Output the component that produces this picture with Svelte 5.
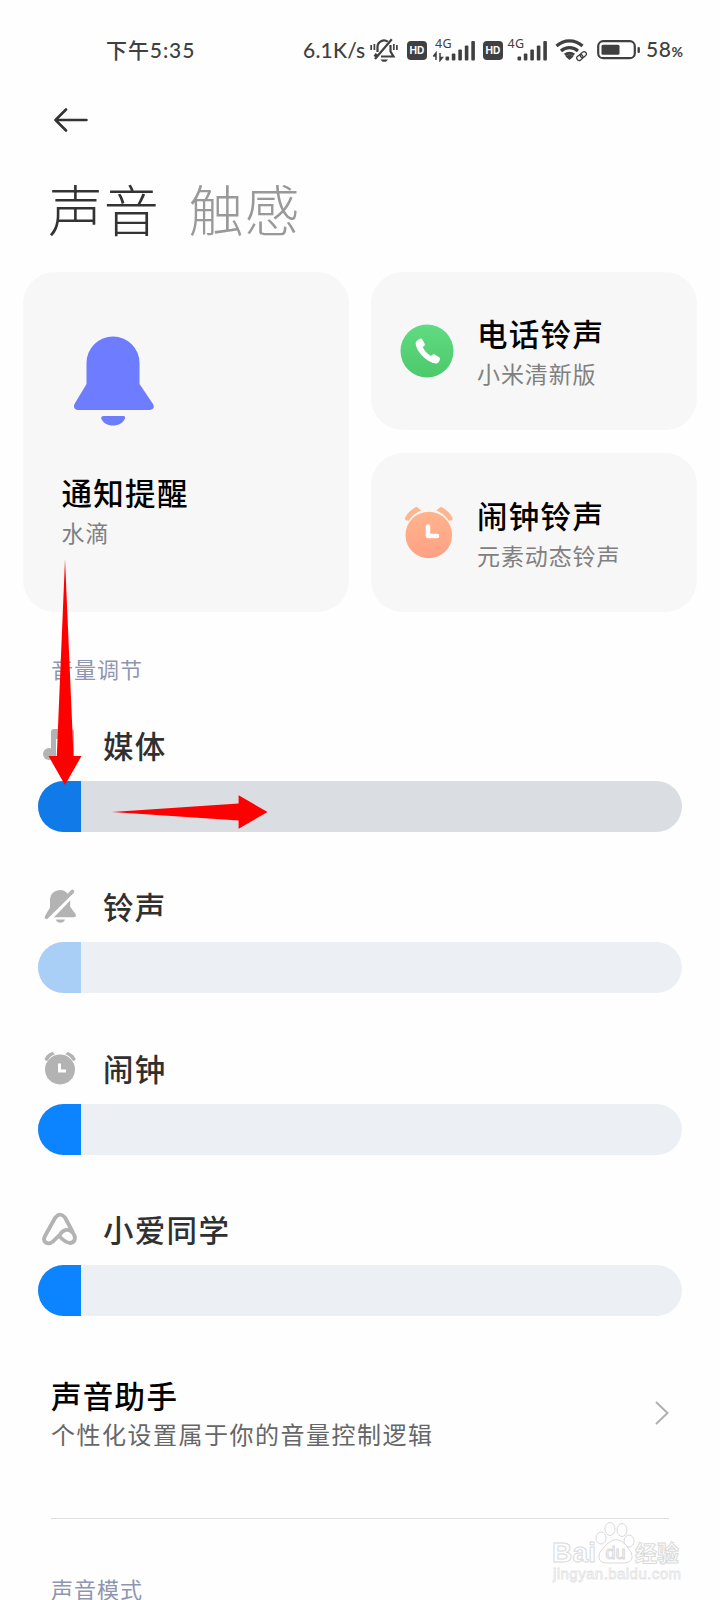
<script lang="ts">
	interface Volume {
		id: string;
		name: string;
		level: number;
		state: string;
	}

	const volumes: Volume[] = [
		{ id: 'media', name: '媒体', level: 6.7, state: 'active' },
		{ id: 'ring', name: '铃声', level: 6.7, state: 'muted' },
		{ id: 'alarm', name: '闹钟', level: 6.7, state: '' },
		{ id: 'xiaoai', name: '小爱同学', level: 6.7, state: '' }
	];

	const ringtones = [
		{ id: 'phone', title: '电话铃声', value: '小米清新版' },
		{ id: 'alarm', title: '闹钟铃声', value: '元素动态铃声' }
	];
</script>

{#snippet hd()}
	<svg class="hd" width="20" height="19" viewBox="0 0 20 19">
		<rect width="20" height="19" rx="4" />
		<text x="2.6" y="13.2" textLength="14.8" lengthAdjust="spacingAndGlyphs">HD</text>
	</svg>
{/snippet}

{#snippet signal(data: boolean)}
	<svg class="signal" class:data width={data ? 42 : 40} height="26" viewBox="0 -2 {data ? 42 : 40} 26">
		<text x={data ? 2 : 0.5} y="9.5" textLength="16.5">4G</text>
		{#if data}
			<path d="M3 22v-6M0.6 18L3 15v3zM7 15v6M9.4 19.5L7 22.5v-3z" stroke-width="1.5" />
		{/if}
		<g transform="translate({data ? 12.5 : 10.5} -.5)">
			<rect y="19" width="3.6" height="4" rx="1" />
			<rect x="6.3" y="16" width="3.6" height="7" rx="1" />
			<rect x="12.8" y="12" width="3.6" height="11" rx="1" />
			<rect x="19.3" y="8" width="3.6" height="15" rx="1" />
			<rect x="25.8" y="3.5" width="3.6" height="19.5" rx="1" />
		</g>
	</svg>
{/snippet}

<main>
	<div class="status">
		<span class="time">下午5:35</span>
		<span class="speed">6.1K/s</span>
		<svg width="28" height="26" viewBox="0 0 28 26" fill="none" stroke="#404040" stroke-width="2.2">
			<path d="M7.5 15V10a6.5 6.5 0 0 1 10.3-5.3M20.5 8v6.5l3 5H11M4.5 19.5l2-2.8M5 22L21.8 2.2" />
			<path d="M1.2 8v5M4.4 7v6M23.8 7v6M26.9 8v5" stroke-width="1.7" />
			<path d="M10.5 22.5h7.5l-2 2.2h-3.5z" fill="#404040" stroke="none" />
		</svg>
		{@render hd()}
		{@render signal(true)}
		{@render hd()}
		{@render signal(false)}
		<svg class="wifi" width="33" height="24" viewBox="0 0 33 24" fill="none" stroke="#404040">
			<path d="M1.5 8a19 19 0 0 1 26 0M6 13a12.5 12.5 0 0 1 17 0M10 17a7 7 0 0 1 9 0" stroke-width="3.2" />
			<path d="M10.5 18.5a5.5 5.5 0 0 1 8 0L14.5 22z" fill="#404040" stroke="none" />
			<g stroke-width="1.3" transform="rotate(-40 26.5 18)">
				<rect x="21" y="15.8" width="6.5" height="4.6" rx="2.3" fill="#fefefe" />
				<rect x="25.5" y="15.8" width="6.5" height="4.6" rx="2.3" />
			</g>
		</svg>
		<svg class="battery" width="44" height="20" viewBox="0 0 44 20">
			<rect x="1.2" y="1.2" width="36.6" height="17" rx="5" fill="none" stroke="#404040" stroke-width="2.2" />
			<rect x="4.5" y="4.8" width="18" height="10" rx="1.5" />
			<rect x="40.5" y="7" width="2.4" height="6" rx="1" />
		</svg>
		<span class="percent">58<small>%</small></span>
	</div>

	<button class="back" aria-label="返回">
		<svg width="34" height="24" viewBox="0 0 34 24" fill="none" stroke="#333" stroke-width="2.6" stroke-linecap="round" stroke-linejoin="round">
			<path d="M32.5 12H1.5M12 1.5L1.5 12l10.5 10.5" />
		</svg>
	</button>

	<nav class="tabs">
		<span class="selected">声音</span>
		<span>触感</span>
	</nav>

	<section class="cards">
		<div class="card notify">
			<svg width="80" height="92" viewBox="0 0 80 92" fill="#6e7cff">
				<path d="M12.5 27a26.5 26.5 0 0 1 53 0V48L79 68q2.5 5-3 6H4q-5.5-1-3.5-6L12.5 48z" />
				<path d="M29 80H49.5q2 0 1.5 2.5C49 87 44.5 89.5 39 89.5S29 87 27.2 82.5Q27 80 29 80z" />
			</svg>
			<h2>通知提醒</h2>
			<p>水滴</p>
		</div>
		{#each ringtones as item (item.id)}
			<div class="card ringtone">
				{#if item.id === 'phone'}
					<svg width="54" height="54" viewBox="0 0 54 54">
						<linearGradient id="green" x2="0" y2="1">
							<stop stop-color="#60db81" />
							<stop offset="1" stop-color="#4dc96c" />
						</linearGradient>
						<circle cx="27" cy="27" r="26.5" fill="url(#green)" />
						<path d="M17.5 16.2l2.3-1.5q1.5-.8 2.5.8l2.3 4q.8 1.5-.5 2.5l-1.4 1q2.6 5.5 8.2 9l1.8-1.4q1-.8 2.2 0l4.3 2.6q1.5 1 .8 2.3l-1.3 2.4q-1 1.6-3 1.5Q29 38.7 22.5 32T15.6 19.5q-.2-2.2 1.9-3.3z" fill="#fff" />
					</svg>
				{:else}
					<svg width="54" height="54" viewBox="0 0 54 54">
						<linearGradient id="orange" x2="0" y2="1">
							<stop stop-color="#ffb48c" />
							<stop offset="1" stop-color="#ffa085" />
						</linearGradient>
						<path d="M4.8 12.2Q8 5.5 15.5 1.3q1.5-.6 2.7.6l3 2.6Q13.5 7.5 8.8 14.8l-2-.3q-2-.6-2-2.3zM52.8 12.2Q49.5 5.5 42 1.3q-1.5-.6-2.7.6l-3 2.6Q44 7.5 48.8 14.8l2-.3q2-.6 2-2.3z" fill="#ffb690" />
						<circle cx="28.8" cy="29" r="23.3" fill="url(#orange)" />
						<path d="M28 20.5V30H37" fill="none" stroke="#fff" stroke-width="4.5" stroke-linecap="round" stroke-linejoin="round" />
					</svg>
				{/if}
				<div>
					<h2>{item.title}</h2>
					<p>{item.value}</p>
				</div>
			</div>
		{/each}
	</section>

	<h3>音量调节</h3>
	<section class="volumes">
		{#each volumes as volume (volume.id)}
			<div class="volume">
				<div class="label">
					<svg width="36" height="36" viewBox="0 0 36 36" fill="#b3b3b3">
						{#if volume.id === 'media'}
							<path d="M9 5q0-3 3-3h17q3 0 3 3v21h-5V12H14v17H9z" />
							<circle cx="7" cy="27" r="6" />
							<circle cx="26" cy="27" r="6" />
						{:else if volume.id === 'ring'}
							<path d="M8 19.5V11a10 10 0 0 1 17.8-5.2L29 2.2q1.5-1.2 2.7 0t0 2.7L5.8 30.5q-1.5 1-2.6 0t-.2-2.6z" />
							<path d="M28.2 12.5v6.3L33.5 26q1.2 2.5-1 3.2H12z" />
							<path d="M14 31.5h8.8c0 2-2 3.2-4.4 3.2S14 33.5 14 31.5z" />
						{:else if volume.id === 'alarm'}
							<path d="M2.7 8.5Q5 4 10.2 1.8l2.8 2.4Q8 6 5.5 10.8q-3 0-2.8-2.3zM33.6 8.5Q31 4 26 1.8l-2.8 2.4Q28.200 6 30.800 10.800q3 0 2.800-2.300z" />
							<circle cx="18" cy="19.5" r="15" />
							<path d="M17.5 13.5v7.5H24" fill="none" stroke="#fff" stroke-width="3" />
						{:else}
							<path d="M10 31.3L18 23.5C21 18.5 25.5 18 29 20.2C34.5 24 34 31.5 28.5 32C25.5 32.3 22 30 17 25M10 31.3C5 34 0 30.5 3 25L13 7Q18 .5 23 6.5L31 21.5" fill="none" stroke="#b3b3b3" stroke-width="3.8" stroke-linejoin="round" />
						{/if}
					</svg>
					<span>{volume.name}</span>
				</div>
				<div class="track {volume.state}">
					<div class="fill" style="width: {volume.level}%"></div>
				</div>
			</div>
		{/each}
	</section>

	<section class="assistant">
		<div>
			<h2>声音助手</h2>
			<p>个性化设置属于你的音量控制逻辑</p>
		</div>
		<svg width="14" height="24" viewBox="0 0 14 24" fill="none" stroke="#b0b0b0" stroke-width="2">
			<path d="M1 1l11.5 11L1 23" />
		</svg>
	</section>
	<hr />
	<h3 class="mode">声音模式</h3>

	<svg class="arrows" width="720" height="1600" viewBox="0 0 720 1600" fill="#f00">
		<path d="M65 559L73.5 756H81.5L65 785 48.5 756H56.8z" />
		<path d="M112 812L238.6 803.5V795.3L267.5 812 238.6 828.8V820.5z" />
	</svg>

	<svg class="watermark" width="150" height="76" viewBox="0 0 150 76">
		<text x="7" y="42" font-size="28" font-weight="bold" textLength="44">Bai</text>
		<ellipse cx="65" cy="9" rx="5" ry="6.5" />
		<ellipse cx="77" cy="10" rx="5" ry="6.5" />
		<ellipse cx="56" cy="18" rx="5" ry="6" />
		<ellipse cx="84" cy="21" rx="5" ry="6" />
		<path d="M62 24Q71 15 80 24L86 32Q90 42 80 43H61Q51 42 55 32z" />
		<text x="60.5" y="38.5" font-size="18" textLength="20">du</text>
		<text x="90" y="41" font-size="22" font-weight="bold" textLength="44">经验</text>
		<text x="8" y="59" font-size="15" textLength="128" class="url">jingyan.baidu.com</text>
	</svg>
</main>

<style>
	:global(body) {
		background: #fefefe;
	}
	main {
		position: relative;
		width: 720px;
		height: 1600px;
		overflow: hidden;
		background: #fefefe;
		font-family: 'Noto Sans CJK SC', sans-serif;
	}
	svg {
		display: block;
		flex: none;
	}
	h2,
	h3,
	p {
		margin: 0;
	}
	.status {
		display: flex;
		align-items: center;
		height: 100px;
		padding-left: 106px;
		color: #404040;
		fill: #404040;
		font-family: Lato, 'Noto Sans CJK SC', sans-serif;
		font-size: 21px;
		font-weight: 500;
		line-height: 28px;
		white-space: nowrap;
	}
	.time {
		width: 197px;
		letter-spacing: 0.9px;
	}
	.speed {
		width: 67px;
		letter-spacing: 0.2px;
	}
	.hd {
		margin-left: 9px;
	}
	.hd text {
		fill: #fff;
		font: bold 10.5px Inter, sans-serif;
	}
	.signal {
		margin: -2px 0 0 4px;
	}
	.signal.data {
		margin: -2px -1px 0 6px;
	}
	.signal text {
		font: 12.5px 'Noto Sans', sans-serif;
	}
	.signal path {
		stroke: #404040;
	}
	.wifi {
		margin-left: 8px;
	}
	.battery {
		margin-left: 9px;
	}
	.percent {
		margin-left: 5px;
		letter-spacing: 0.6px;
	}
	.percent small {
		font-size: 14px;
		font-weight: bold;
	}
	.back {
		display: flex;
		align-items: center;
		height: 40px;
		margin-left: 54px;
		padding: 0;
		border: 0;
		background: none;
	}
	.tabs {
		display: flex;
		gap: 29px;
		margin: 37px 0 35px 48px;
		font-size: 55px;
		font-weight: 300;
		line-height: 60px;
		letter-spacing: 0.8px;
		color: #999;
	}
	.tabs .selected {
		color: #333;
	}
	.cards {
		display: grid;
		grid-template-columns: 326px 326px;
		grid-template-rows: 158px 159px;
		gap: 23px 22px;
		margin-left: 23px;
	}
	.card {
		border-radius: 32px;
		background: #f7f7f7;
	}
	.notify {
		grid-row: span 2;
		padding: 64px 0 0 38.5px;
	}
	.notify svg {
		margin: 0 0 46px 12px;
	}
	.ringtone {
		display: flex;
		align-items: center;
		gap: 23.5px;
		padding-left: 28.5px;
	}
	h2 {
		font-size: 30.5px;
		font-weight: 500;
		line-height: 36px;
		letter-spacing: 1.3px;
		color: #000;
	}
	.card p {
		margin-top: 7px;
		font-size: 23px;
		line-height: 30px;
		letter-spacing: 0.9px;
		color: #808080;
	}
	.ringtone h2 {
		padding-top: 1px;
	}
	h3 {
		margin: 41px 0 41.5px 51px;
		font-size: 22px;
		font-weight: 400;
		line-height: 30px;
		letter-spacing: 1px;
		color: #8f95af;
	}
	.volumes {
		display: flex;
		flex-direction: column;
		gap: 54.5px;
		margin: 0 38px;
	}
	.label {
		display: flex;
		align-items: center;
		gap: 25px;
		height: 40px;
		margin-bottom: 16px;
		padding-left: 4px;
		font-size: 30.5px;
		font-weight: 500;
		line-height: 40px;
		letter-spacing: 1.3px;
		color: #303030;
	}
	.track {
		height: 51px;
		border-radius: 26px;
		overflow: hidden;
		background: #ecf0f5;
	}
	.fill {
		height: 100%;
		background: #0d84ff;
	}
	.active {
		background: #dadde2;
	}
	.active .fill {
		background: #107be8;
	}
	.muted .fill {
		background: #a9cff6;
	}
	.assistant {
		display: flex;
		align-items: center;
		justify-content: space-between;
		margin: 60.5px 51px 69px;
	}
	.assistant p {
		margin-top: 6px;
		font-size: 24px;
		line-height: 30px;
		letter-spacing: 1.5px;
		color: #666;
	}
	hr {
		height: 1px;
		margin: 0 51px;
		border: 0;
		background: #dedede;
	}
	.mode {
		margin: 54px 0 0 51px;
	}
	.arrows {
		position: absolute;
		top: 0;
		left: 0;
	}
	.watermark {
		position: absolute;
		top: 1520px;
		left: 545px;
		fill: #fefefe;
		stroke: #dadada;
		stroke-width: 1px;
		font-family: 'Liberation Sans', 'Noto Sans CJK SC', sans-serif;
	}
	.watermark .url {
		stroke: #e4e4e4;
		stroke-width: 0.8px;
	}
</style>
